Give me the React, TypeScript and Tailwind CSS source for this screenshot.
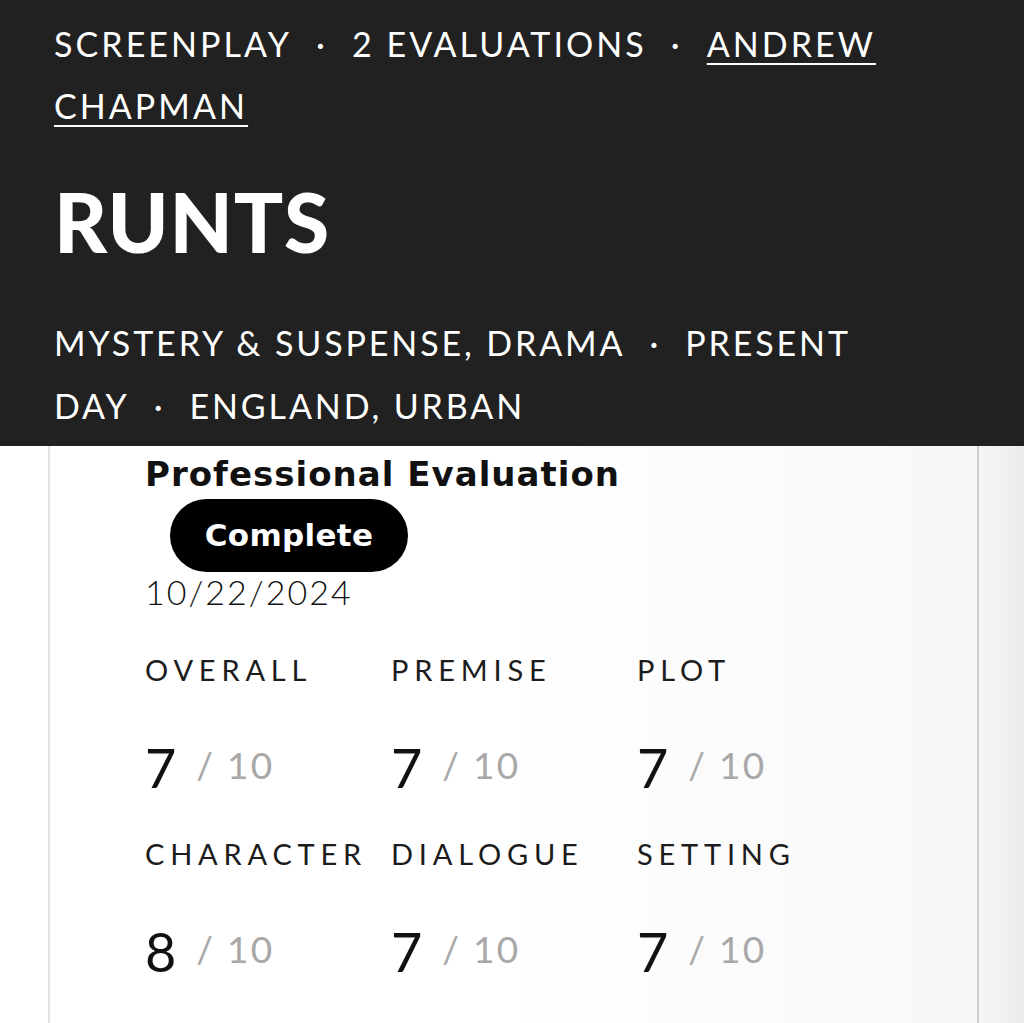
import React from 'react';

const scores = [
  { label: 'OVERALL', value: 7 },
  { label: 'PREMISE', value: 7 },
  { label: 'PLOT', value: 7 },
  { label: 'CHARACTER', value: 8 },
  { label: 'DIALOGUE', value: 7 },
  { label: 'SETTING', value: 7 },
];

const Dot: React.FC = () => <span className="mx-[24px]">·</span>;

const ScoreCell: React.FC<{ label: string; value: number }> = ({ label, value }) => (
  <div className="flex flex-col">
    <div className="h-[50px] flex items-center text-[29px] tracking-[0.2em] text-[#1c1c1c] whitespace-nowrap">{label}</div>
    <div className="mt-[48px] mb-[36px] h-[50px] flex items-center">
      <span className="text-[54px] leading-none text-[#111]">{value}</span>
      <span className="ml-[20px] text-[37px] leading-none text-[#a8a8a8] tracking-[0.06em] -translate-y-[4px]">/ 10</span>
    </div>
  </div>
);

const App: React.FC = () => {
  return (
    <div className="w-[1024px] h-[1023px] overflow-hidden bg-white" style={{ fontFamily: 'Lato, "Open Sans", sans-serif' }}>
      <header className="bg-[#212121] text-white px-[54px] pt-[13px] pb-[9px]">
        <p className="text-[34px] leading-[62px] tracking-[0.09em] max-w-[900px]">
          SCREENPLAY<Dot />2 EVALUATIONS<Dot />
          <span className="underline underline-offset-[6px] decoration-2">ANDREW CHAPMAN</span>
        </p>
        <h1 className="mt-[39px] text-[82px] leading-[91px] font-black tracking-[0.01em]">RUNTS</h1>
        <p className="mt-[44px] text-[34px] leading-[63px] tracking-[0.085em] max-w-[860px]">
          MYSTERY &amp; SUSPENSE, DRAMA<Dot />PRESENT DAY<Dot />ENGLAND, URBAN
        </p>
      </header>
      <div className="flex h-[577px]">
        <div className="w-[48px] bg-white" />
        <section className="flex-1 border-l-2 border-r-2 border-l-[#e2e2e2] border-r-[#d0d0d0] bg-gradient-to-r from-white via-white to-[#f7f7f7] pl-[95px]">
          <h2
            className="mt-[10px] text-[34px] leading-[36px] font-bold text-[#111] tracking-[0.03em]"
            style={{ fontFamily: '"DejaVu Sans", Lato, sans-serif' }}
          >
            Professional Evaluation
          </h2>
          <div className="ml-[25px] mt-[7px] w-[238px] h-[73px] rounded-full bg-black flex items-center justify-center">
            <span className="text-white text-[31px] font-bold tracking-[0.01em]" style={{ fontFamily: '"DejaVu Sans", Lato, sans-serif' }}>
              Complete
            </span>
          </div>
          <div className="mt-[2px] text-[34px] leading-[36px] font-light tracking-[0.06em] text-[#111]">10/22/2024</div>
          <div className="mt-[35px] grid grid-cols-[246px_246px_246px]">
            {scores.map((s) => (
              <ScoreCell key={s.label} label={s.label} value={s.value} />
            ))}
          </div>
        </section>
        <div className="w-[45px] bg-gradient-to-r from-[#f5f5f5] to-[#ececec]" />
      </div>
    </div>
  );
};

export default App;
